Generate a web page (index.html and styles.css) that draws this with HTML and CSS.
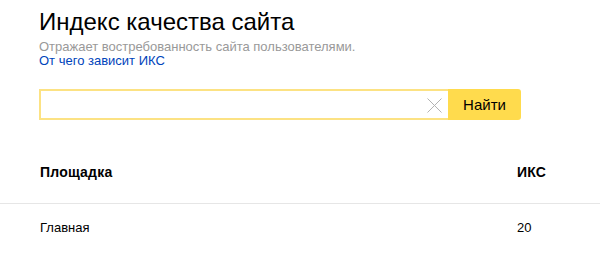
FILE: index.html
```html
<!DOCTYPE html>
<html lang="ru">
<head>
<meta charset="utf-8">
<link rel="stylesheet" href="styles.css">
</head>
<body>
<div class="page">
  <header class="intro">
    <h1 class="title">Индекс качества сайта</h1>
    <p class="subtitle">Отражает востребованность сайта пользователями.</p>
    <a class="link" href="#">От чего зависит ИКС</a>
  </header>
  <form class="search">
    <div class="field">
      <input class="input" type="text" value="">
      <span class="clear">
        <svg width="15" height="15" viewBox="0 0 15 15"><path d="M0.5 0.5L14.5 14.5M14.5 0.5L0.5 14.5" stroke="#b3b3b3" stroke-width="1" fill="none"/></svg>
      </span>
    </div>
    <button class="button" type="button">Найти</button>
  </form>
  <div class="table">
    <div class="row head">
      <div class="cell">Площадка</div>
      <div class="cell">ИКС</div>
    </div>
    <div class="row">
      <div class="cell name">Главная</div>
      <div class="cell">20</div>
    </div>
  </div>
</div>
</body>
</html>
```

FILE: styles.css
```css
* { box-sizing: border-box; }
html, body { margin: 0; padding: 0; background: #fff; }
body { font-family: "Liberation Sans", Arial, sans-serif; color: #000; width: 600px; height: 270px; overflow: hidden; }
.page { display: flex; flex-direction: column; }
.intro { padding: 8px 39px 0 39px; display: flex; flex-direction: column; }
.title { margin: 0; font-size: 24px; line-height: 28px; font-weight: normal; }
.subtitle { margin: 3.5px 0 0 0; font-size: 13px; line-height: 14px; color: #999; }
.link { font-size: 13px; line-height: 14px; color: #04b; text-decoration: none; align-self: flex-start; }
.search { display: flex; margin: 21.5px 0 0 39px; height: 31px; width: 482px; }
.field { position: relative; flex: 1; border: 2px solid #fce283; border-right: none; display: flex; }
.input { flex: 1; border: none; outline: none; padding: 0 30px 0 8px; font: 15px "Liberation Sans", Arial, sans-serif; background: #fff; }
.clear { position: absolute; right: 6px; top: 7px; width: 15px; height: 15px; display: flex; }
.button { width: 73px; border: none; background: #ffdb4d; border-radius: 0 3px 3px 0; font: 15px "Liberation Sans", Arial, sans-serif; color: #000; padding: 0; margin: 0; }
.table { margin-top: 30px; display: flex; flex-direction: column; }
.row { display: grid; grid-template-columns: 1fr 44px; padding: 0 39px 0 40px; font-size: 13px; line-height: 16px; }
.head { font-size: 14px; letter-spacing: 0.2px; font-weight: bold; padding-top: 14px; padding-bottom: 22.5px; border-bottom: 1px solid #e6e6e6; }
.row:not(.head) { padding-top: 16px; }
.cell { white-space: nowrap; }
```
